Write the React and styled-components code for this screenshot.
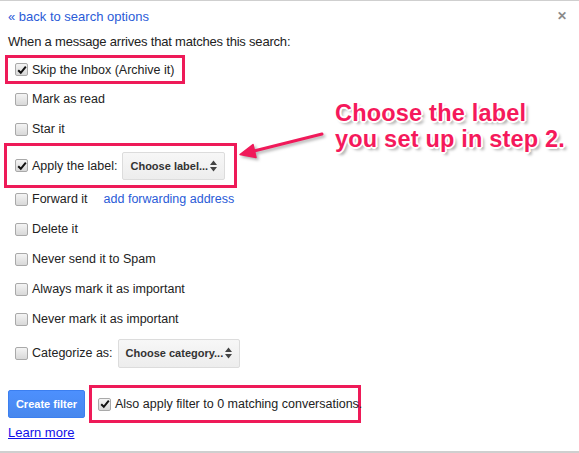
import React from 'react'
import styled, { createGlobalStyle } from 'styled-components'

const GlobalStyle = createGlobalStyle`
  html, body {
    margin: 0;
    padding: 0;
    background: #fff;
  }
  body {
    font-family: "Liberation Sans", Arial, sans-serif;
    font-size: 12.5px;
    color: #222;
  }
`

const Frame = styled.div`
  position: relative;
  box-sizing: border-box;
  width: 579px;
  height: 453px;
  border-top: 1px solid #cfcfcf;
  border-bottom: 2px solid #cfcfcf;
  padding: 0 8px;
  overflow: hidden;
`

const TopBar = styled.div`
  display: flex;
  justify-content: space-between;
  align-items: center;
  padding-top: 8px;
  height: 16px;
  line-height: 16px;
`

const BackLink = styled.a`
  color: #2a5bd7;
  text-decoration: none;
  font-size: 13px;
`

const Close = styled.span`
  color: #8a8a8a;
  font-size: 12px;
  font-weight: bold;
  margin-right: 4px;
  margin-top: -2px;
`

const Intro = styled.div`
  margin-top: 9px;
  line-height: 16px;
  font-size: 13px;
  letter-spacing: -0.2px;
`

const Row = styled.div`
  display: flex;
  align-items: center;
  height: ${p => p.$h || 30}px;
  margin-top: ${p => p.$mt || 0}px;
  padding-left: 7px;
`

const Highlight = styled.div`
  display: flex;
  align-items: center;
  box-sizing: border-box;
  width: ${p => p.$w}px;
  height: ${p => p.$h}px;
  margin-top: ${p => p.$mt || 0}px;
  margin-left: ${p => p.$ml || -3}px;
  border: 3px solid #ee1a58;
  padding-left: ${p => p.$pl || 7}px;
`

const Box = styled.span`
  box-sizing: border-box;
  display: inline-flex;
  align-items: center;
  justify-content: center;
  flex: none;
  width: 13px;
  height: 13px;
  border: 1px solid #a9a9a9;
  border-radius: 2px;
  background: linear-gradient(#f4f4f4, #d8d8d8);
  margin-right: 4px;
`

const Label = styled.span`
  line-height: 16px;
  white-space: nowrap;
`

const TextLink = styled.a`
  color: #2a5bd7;
  text-decoration: none;
  margin-left: 16px;
`

const Select = styled.div`
  box-sizing: border-box;
  display: flex;
  align-items: center;
  justify-content: space-between;
  width: ${p => p.$w}px;
  height: ${p => p.$h}px;
  margin-left: 5px;
  padding: 0 7px 0 7px;
  border: 1px solid #dcdcdc;
  border-radius: 2px;
  background: linear-gradient(#f7f7f7, #ededed);
  color: #333;
  font-size: 11px;
  font-weight: bold;
  white-space: nowrap;
`

const Footer = styled.div`
  display: flex;
  align-items: flex-start;
  margin-top: 13px;
`

const FooterLeft = styled.div`
  display: flex;
  flex-direction: column;
  margin-top: 5px;
`

const Button = styled.div`
  box-sizing: border-box;
  width: 77px;
  height: 28px;
  display: flex;
  align-items: center;
  justify-content: center;
  background: linear-gradient(#4d90fe, #4787ed);
  border: 1px solid #3c7ff0;
  border-radius: 2px;
  color: #fff;
  font-size: 11px;
  font-weight: bold;
`

const LearnMore = styled.a`
  margin-top: 7px;
  line-height: 16px;
  font-size: 13px;
  color: #1010e8;
  text-decoration: underline;
`

const Note = styled.div`
  position: absolute;
  left: 335px;
  top: 99px;
  font-family: "Liberation Sans", Arial, sans-serif;
  font-weight: bold;
  font-size: 23.5px;
  line-height: 26px;
  letter-spacing: 0.2px;
  color: #f5195b;
  text-shadow:
    1px 0 0 #fff, -1px 0 0 #fff, 0 1px 0 #fff, 0 -1px 0 #fff,
    2px 0 0 #fff, -2px 0 0 #fff, 0 2px 0 #fff, 0 -2px 0 #fff,
    1px 1px 0 #fff, -1px -1px 0 #fff, 1px -1px 0 #fff, -1px 1px 0 #fff,
    3px 3px 3px rgba(0, 0, 0, 0.35);
  white-space: nowrap;
`

const Arrow = styled.svg`
  position: absolute;
  left: 236px;
  top: 126px;
  overflow: visible;
  filter: drop-shadow(2px 2px 1.5px rgba(0, 0, 0, 0.3));
`

function Checkbox({ checked }) {
  return (
    <Box>
      {checked && (
        <svg width="10" height="10" viewBox="0 0 10 10">
          <path d="M1.2 5.2 L3.8 7.8 L8.8 1.6" fill="none" stroke="#111" strokeWidth="2" />
        </svg>
      )}
    </Box>
  )
}

function UpDown() {
  return (
    <svg width="7" height="12" viewBox="0 0 7 12">
      <path d="M0 5 L3.5 0.5 L7 5 Z M0 7 L3.5 11.5 L7 7 Z" fill="#444" />
    </svg>
  )
}

export default function App() {
  return (
    <>
      <GlobalStyle />
      <Frame>
        <TopBar>
          <BackLink href="#">« back to search options</BackLink>
          <Close>✕</Close>
        </TopBar>
        <Intro>When a message arrives that matches this search:</Intro>

        <Highlight $w={180} $h={29} $mt={5}>
          <Checkbox checked />
          <Label>Skip the Inbox (Archive it)</Label>
        </Highlight>
        <Row>
          <Checkbox />
          <Label>Mark as read</Label>
        </Row>
        <Row>
          <Checkbox />
          <Label>Star it</Label>
        </Row>
        <Highlight $w={233} $h={45} $mt={-1} $ml={-4} $pl={8}>
          <Checkbox checked />
          <Label>Apply the label:</Label>
          <Select $w={103} $h={28}>
            Choose label... <UpDown />
          </Select>
        </Highlight>
        <Row $mt={-4}>
          <Checkbox />
          <Label>Forward it</Label>
          <TextLink href="#">add forwarding address</TextLink>
        </Row>
        <Row>
          <Checkbox />
          <Label>Delete it</Label>
        </Row>
        <Row>
          <Checkbox />
          <Label>Never send it to Spam</Label>
        </Row>
        <Row>
          <Checkbox />
          <Label>Always mark it as important</Label>
        </Row>
        <Row>
          <Checkbox />
          <Label>Never mark it as important</Label>
        </Row>
        <Row $h={38}>
          <Checkbox />
          <Label>Categorize as:</Label>
          <Select $w={122} $h={29}>
            Choose category... <UpDown />
          </Select>
        </Row>

        <Footer>
          <FooterLeft>
            <Button>Create filter</Button>
            <LearnMore href="#">Learn more</LearnMore>
          </FooterLeft>
          <Highlight $w={272} $h={38} $ml={4} $pl={6}>
            <Checkbox checked />
            <Label>Also apply filter to 0 matching conversations.</Label>
          </Highlight>
        </Footer>

        <Arrow width="90" height="34" viewBox="0 0 90 34">
          <path d="M86 7 L14 25" stroke="#f01a5a" strokeWidth="3" strokeLinecap="round" />
          <path d="M4 27.5 L17 17.5 L20 30.5 Z" fill="#f01a5a" stroke="#f01a5a" strokeWidth="1.5" strokeLinejoin="round" />
        </Arrow>
        <Note>
          Choose the label
          <br />
          you set up in step 2.
        </Note>
      </Frame>
    </>
  )
}
